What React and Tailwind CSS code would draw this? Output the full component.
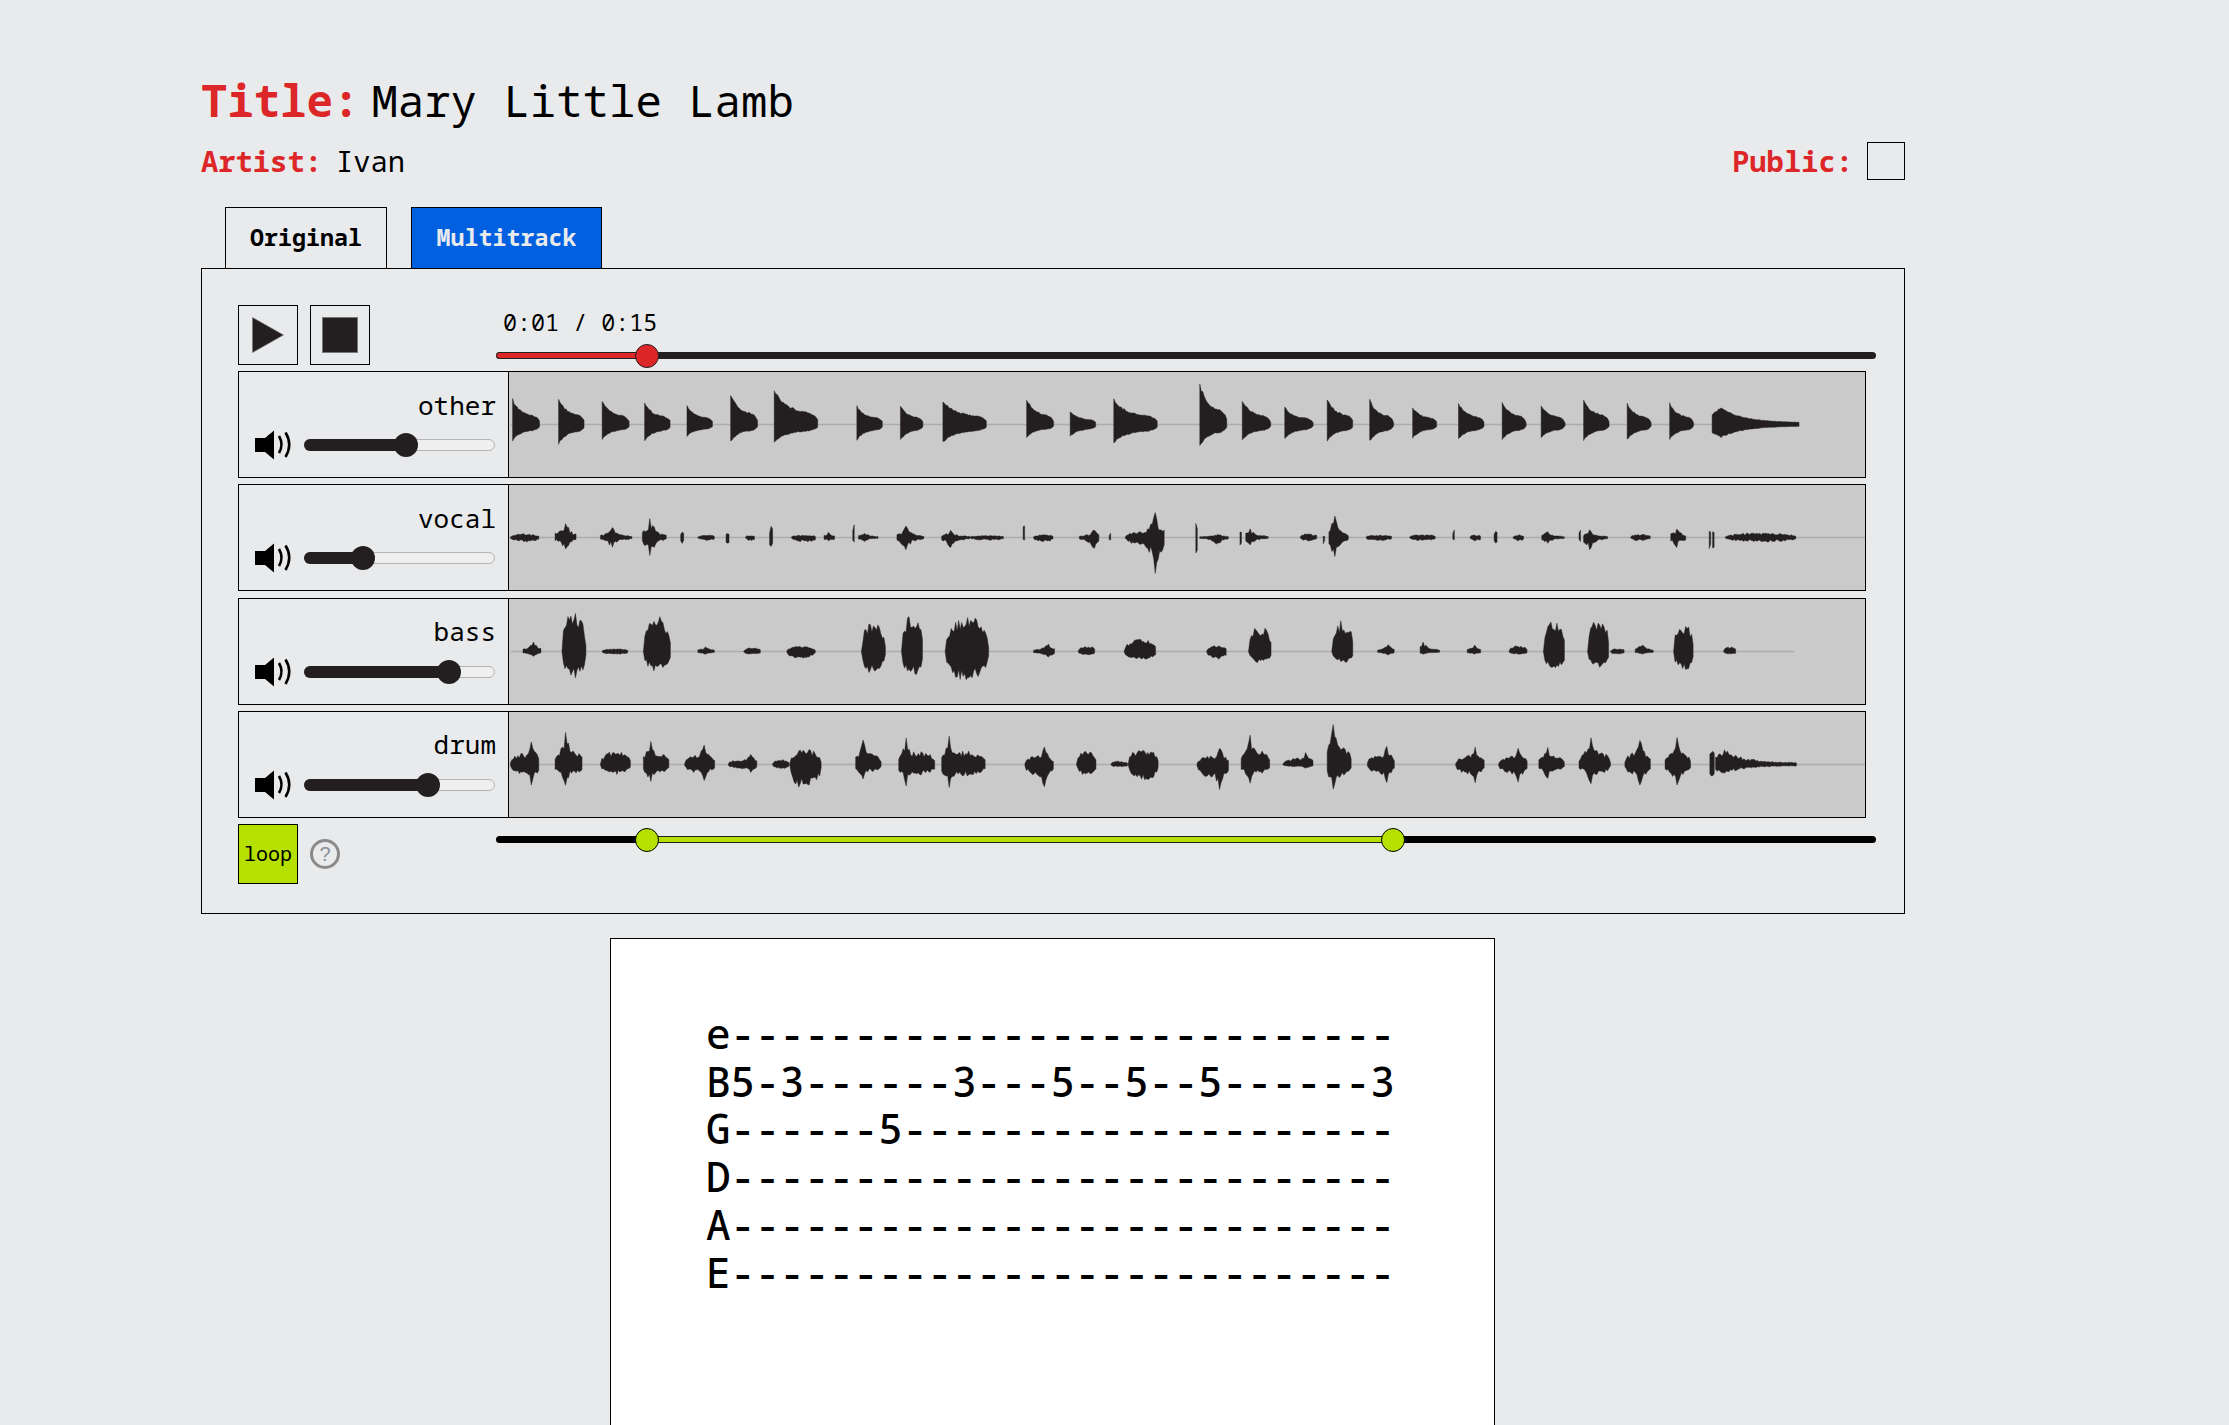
const rnd = (i) => {
  const v = Math.sin(i * 12.9898) * 43758.5453
  return v - Math.floor(v)
}

// blobs are [start, end, top, bottom, shape] measured off the full wave picture
const partA = 500
const partB = 1000

const tracks = [
  {
    name: 'other',
    vol: 53.7,
    mid: 192,
    body: 0,
    jitter: 0.12,
    lineEnd: 1790,
    a: [
      [22, 70, 115, 242, 'd'], [102, 148, 110, 252, 'd'], [178, 226, 117, 237, 'd'], [252, 298, 124, 242, 'd'],
      [326, 372, 135, 228, 'd'], [402, 450, 97, 243, 'd'], [478, 556, 85, 246, 'd'], [622, 668, 135, 238, 'd'],
      [698, 738, 133, 240, 'd'], [772, 850, 118, 245, 'd'], [918, 966, 113, 230, 'd'], [994, 1040, 152, 229, 'd'],
      [1070, 1148, 116, 248, 'd'], [1220, 1268, 67, 258, 'd'], [1294, 1344, 116, 239, 'd'], [1368, 1418, 139, 234, 'd'],
      [1442, 1488, 113, 242, 'd'], [1516, 1558, 117, 243, 'd'],
    ],
    b: [
      [720, 763, 138, 233, 'd'], [800, 845, 127, 238, 'd'], [876, 918, 120, 240, 'd'], [944, 986, 131, 235, 'd'],
      [1018, 1063, 112, 240, 'd'], [1094, 1136, 127, 238, 'd'], [1168, 1210, 127, 238, 'd'], [1242, 1395, 141, 231, 'l'],
    ],
  },
  {
    name: 'vocal',
    vol: 30.5,
    mid: 533,
    body: 0.2,
    jitter: 0.6,
    lineEnd: 1866,
    a: [
      [18, 70, 523, 545], [96, 135, 478, 574, 113], [175, 232, 500, 565, 195], [248, 292, 468, 592, 262],
      [315, 322, 517, 550, 318], [345, 375, 527, 541], [394, 400, 522, 550, 397], [428, 445, 527, 542],
      [470, 476, 497, 560, 472], [508, 552, 527, 546], [565, 585, 518, 543, 573], [615, 620, 493, 546, 617],
      [625, 660, 520, 545, 635], [692, 740, 496, 572, 708], [770, 820, 510, 566, 785], [820, 880, 528, 540],
      [912, 916, 495, 540, 914], [930, 965, 525, 545], [1010, 1045, 510, 568, 1035], [1062, 1066, 520, 540, 1064],
      [1090, 1160, 447, 658, 1143], [1213, 1216, 488, 586, 1214], [1220, 1270, 522, 555, 1250], [1290, 1293, 515, 558, 1291],
      [1300, 1340, 508, 555, 1308], [1395, 1425, 522, 542], [1435, 1438, 530, 553, 1436], [1445, 1480, 465, 596, 1455],
      [1510, 1555, 527, 542],
    ],
    b: [
      [715, 760, 525, 542], [790, 795, 510, 540, 792], [820, 840, 525, 542], [862, 868, 515, 550, 865],
      [895, 915, 525, 542], [945, 985, 515, 550, 955], [1010, 1014, 510, 545, 1012], [1018, 1060, 510, 572, 1028],
      [1100, 1135, 524, 542], [1170, 1198, 507, 563, 1180], [1237, 1240, 512, 568, 1238], [1243, 1246, 515, 568, 1244],
      [1265, 1390, 520, 545],
    ],
  },
  {
    name: 'bass',
    vol: 76.3,
    mid: 183,
    body: 0.3,
    jitter: 0.42,
    lineEnd: 1795,
    a: [
      [40, 72, 155, 197, 58], [108, 150, 55, 265], [178, 225, 176, 190], [250, 298, 73, 242],
      [345, 375, 170, 190, 358], [425, 455, 173, 190], [500, 550, 168, 202], [630, 672, 90, 250],
      [700, 738, 68, 255], [776, 852, 68, 272], [930, 968, 160, 200, 955], [1008, 1038, 168, 192],
      [1088, 1145, 145, 206], [1232, 1268, 165, 205], [1305, 1345, 105, 217], [1450, 1488, 90, 218],
      [1530, 1560, 163, 192, 1548],
    ],
    b: [
      [733, 768, 155, 190, 738], [815, 840, 165, 190, 828], [888, 920, 165, 190], [948, 987, 82, 235],
      [1025, 1063, 83, 230], [1065, 1090, 176, 190], [1108, 1140, 162, 190, 1120], [1175, 1210, 97, 240],
      [1262, 1285, 170, 190],
    ],
  },
  {
    name: 'drum',
    vol: 65.3,
    mid: 524,
    body: 0.48,
    jitter: 0.45,
    lineEnd: 1866,
    a: [
      [18, 70, 455, 588, 55], [96, 145, 420, 590, 114], [175, 228, 484, 553], [250, 296, 445, 580, 262],
      [322, 375, 460, 577, 355], [398, 450, 493, 548, 437], [475, 505, 510, 535], [505, 560, 476, 598],
      [620, 665, 447, 568, 633], [695, 760, 442, 588, 708], [770, 848, 440, 596, 783], [915, 965, 468, 596, 948],
      [1005, 1040, 484, 558], [1065, 1095, 515, 530], [1095, 1148, 475, 572], [1215, 1270, 472, 608, 1255],
      [1292, 1343, 430, 582, 1308], [1365, 1418, 487, 535, 1405], [1442, 1485, 397, 605, 1453], [1512, 1560, 464, 582, 1545],
    ],
    b: [
      [795, 845, 467, 582, 828], [870, 920, 470, 582, 905], [940, 985, 470, 568, 955], [1010, 1065, 433, 585, 1030],
      [1090, 1135, 445, 592, 1117], [1160, 1205, 437, 590, 1180], [1238, 1246, 465, 572, 1242], [1248, 1390, 478, 552, 'l'],
    ],
  },
]

const envelope = (t, shape, x0, x1, body) => {
  if (shape === 'd') {
    const fall = 0.3 + 0.7 * Math.exp(-t * 3.5)
    return t < 0.7 ? fall : fall * Math.sqrt(Math.max(0, 1 - ((t - 0.7) / 0.3) ** 2))
  }
  if (shape === 'l') {
    return t < 0.1 ? 0.6 + 4 * t : 0.08 + 0.92 * Math.exp(-(t - 0.1) * 3.8)
  }
  const round = Math.pow(Math.max(0, Math.sin(Math.PI * t)), 0.4)
  if (shape === undefined) return round
  const p = (shape - x0) / (x1 - x0)
  const spike = Math.exp(-Math.abs(t - p) * (x1 - x0) * 0.09)
  return Math.max(round * body, spike)
}

function wavePath(track) {
  let d = ''
  let seed = track.mid
  const addBlobs = (list, origin) => {
    list.forEach(([z0, z1, top, bot, shape]) => {
      const x0 = origin + z0 / 1.742 - 509
      const x1 = origin + z1 / 1.742 - 509
      const up = (track.mid - top) / 3
      const down = (bot - track.mid) / 3
      const upper = []
      const lower = []
      for (let x = x0; x <= x1 + 0.01; x += 1.5) {
        const e = envelope((x - x0) / Math.max(1, x1 - x0), shape, z0, z1, track.body)
        seed += 1
        // spikes keep their measured height, the noise only eats into the body
        const j = typeof shape === 'number' && e > 0.9 ? track.jitter * 0.15 : track.jitter
        const a = up * e * (1 - j * rnd(seed)) + 0.5
        const b = down * e * (1 - j * rnd(seed + 500)) + 0.5
        upper.push(`${x.toFixed(1)} ${(52.5 - a).toFixed(1)}`)
        lower.unshift(`${x.toFixed(1)} ${(52.5 + b).toFixed(1)}`)
      }
      d += `M${upper.join('L')}L${lower.join('L')}Z`
    })
  }
  addBlobs(track.a, partA)
  addBlobs(track.b, partB)
  return d
}

function Waveform({ track }) {
  return (
    <svg viewBox="0 0 1357 105" preserveAspectRatio="none" className="block h-full w-full">
      <line x1="2" y1="52.5" x2={track.lineEnd - 509} y2="52.5" stroke="#acacac" strokeWidth="1.4" />
      <path d={wavePath(track)} fill="#231f20" stroke="#231f20" strokeOpacity="0.45" strokeWidth="1" />
    </svg>
  )
}

function SpeakerIcon() {
  return (
    <svg width="37" height="30" viewBox="0 0 37 30" className="shrink-0">
      <path d="M0 8H10L19 0.5V29.5L10 22H0Z" fill="#000" />
      <path d="M24 6Q29 14.5 24 23" fill="none" stroke="#000" strokeWidth="2.6" />
      <path d="M30.5 2.5Q38 14.5 30.5 27" fill="none" stroke="#000" strokeWidth="2.6" />
    </svg>
  )
}

function TrackRow({ track }) {
  return (
    <div className="flex h-[107px] w-[1628px] border border-black">
      <div className="flex w-[270px] shrink-0 flex-col items-end border-r border-black pr-[12px] pt-[15.5px]">
        <div className="text-[26px] leading-[34px]">{track.name}</div>
        <div className="mt-[8.5px] flex w-full items-center pl-[16px]">
          <SpeakerIcon />
          <div className="relative ml-[12px] h-[12px] w-[191px] rounded-full border border-[#b4b4b4] bg-[#efefef]">
            <div
              className="absolute -left-px -top-px h-[12px] rounded-full bg-[#231f20]"
              style={{ width: `${track.vol}%` }}
            />
            <div
              className="absolute top-1/2 h-[24px] w-[24px] -translate-x-1/2 -translate-y-1/2 rounded-full bg-[#231f20]"
              style={{ left: `${track.vol}%` }}
            />
          </div>
        </div>
      </div>
      <div className="min-w-0 flex-1 bg-[#cacaca]">
        <Waveform track={track} />
      </div>
    </div>
  )
}

const tabLines = [
  'e---------------------------',
  'B5-3------3---5--5--5------3',
  'G------5--------------------',
  'D---------------------------',
  'A---------------------------',
  'E---------------------------',
]

export default function App() {
  return (
    <div className="h-[1425px] overflow-hidden bg-[#e9eaec] pl-[201px] font-['Noto_Sans_Mono','Liberation_Mono',monospace] text-black">
      <div className="w-[1704px]">
        <h1 className="flex items-baseline gap-[12px] pt-[72px] text-[44px] leading-[56px]">
          <span className="font-bold text-[#dc2628]">Title:</span>
          <span>Mary Little Lamb</span>
        </h1>

        <div className="flex h-[50px] items-center justify-between pt-[15px] text-[28.8px] leading-[36px]">
          <div className="flex items-baseline gap-[14px]">
            <span className="font-bold text-[#dc2628]">Artist:</span>
            <span>Ivan</span>
          </div>
          <div className="flex items-center gap-[14px]">
            <span className="font-bold text-[#dc2628]">Public:</span>
            <div className="h-[38px] w-[38px] border border-black" />
          </div>
        </div>

        {/* TABS */}
        <div className="mt-[29px] flex gap-[24px] pl-[24px] text-[23.3px] font-bold">
          <div className="flex h-[61px] w-[162px] items-center justify-center border border-b-0 border-black pb-[2px]">
            Original
          </div>
          <div className="flex h-[61px] w-[191px] items-center justify-center border border-b-0 border-black bg-[#0060df] pb-[2px] text-[#e9eaec]">
            Multitrack
          </div>
        </div>

        {/* PLAYER */}
        <div className="h-[646px] border border-black pl-[36px] pt-[36px]">
          <div className="flex h-[60px]">
            <button className="flex h-[60px] w-[60px] items-center justify-center border border-black">
              <svg width="32" height="36" viewBox="0 0 32 36">
                <path d="M0.5 0.5L31.5 18L0.5 35.5Z" fill="#231f20" stroke="#777" strokeWidth="0.6" />
              </svg>
            </button>
            <button className="ml-[12px] flex h-[60px] w-[60px] items-center justify-center border border-black">
              <div className="h-[36px] w-[36px] border border-[#777] bg-[#231f20]" />
            </button>
            <div className="ml-[126px] flex w-[1380px] flex-col">
              <div className="pl-[7px] pt-[1px] text-[23.4px] leading-[32px]">0:01 / 0:15</div>
              <div className="relative mt-[14px] h-[7px] rounded-full bg-[#231f20]">
                <div className="h-[7px] w-[151px] rounded-full border border-[#231f20] bg-[#dc2628]" />
                <div className="absolute left-[139px] top-[-8px] h-[24px] w-[24px] rounded-full border border-[#231f20] bg-[#dc2628]" />
              </div>
            </div>
          </div>

          <div className="mt-[6px] flex flex-col gap-[6.33px]">
            {tracks.map((track) => (
              <TrackRow key={track.name} track={track} />
            ))}
          </div>

          <div className="mt-[6px] flex h-[60px]">
            <button className="flex h-[60px] w-[60px] items-center justify-center border border-black bg-[#b5e000] text-[20px]">
              loop
            </button>
            <div className="ml-[12px] mt-[15px] flex h-[30px] w-[30px] items-center justify-center rounded-full border-[3px] border-[#8a8a8a] font-['Liberation_Sans',sans-serif] text-[20px] text-[#8a8f98]">
              ?
            </div>
            <div className="ml-[156px] w-[1380px] pt-[12px]">
              <div className="relative h-[7px] rounded-full bg-black">
                <div className="absolute left-[151px] h-[7px] w-[746px] border border-[#231f20] bg-[#b5e000]" />
                <div className="absolute left-[139px] top-[-8px] h-[24px] w-[24px] rounded-full border border-black bg-[#b5e000]" />
                <div className="absolute left-[885px] top-[-8px] h-[24px] w-[24px] rounded-full border border-black bg-[#b5e000]" />
              </div>
            </div>
          </div>
        </div>

        {/* TAB SHEET */}
        <div className="ml-[409px] mt-[24px] h-[600px] w-[885px] border border-black bg-white pl-[95px] pt-[71px]">
          <pre className="font-['Noto_Sans_Mono','Liberation_Mono',monospace] text-[41px] font-medium leading-[47.7px]">
            {tabLines.join('\n')}
          </pre>
        </div>
      </div>
    </div>
  )
}
